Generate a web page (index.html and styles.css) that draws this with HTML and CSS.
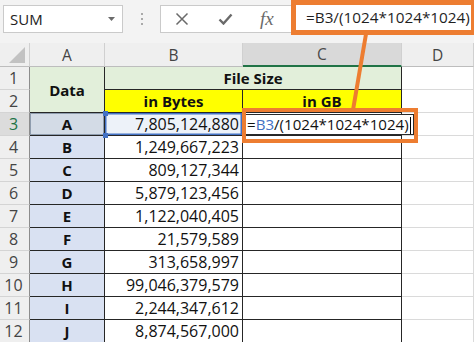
FILE: index.html
```html
<!DOCTYPE html>
<html>
<head>
<meta charset="utf-8">
<link rel="stylesheet" href="styles.css">
</head>
<body>
<div class="toolbar">
  <div class="namebox"><span>SUM</span><svg class="arrow" width="7" height="4" viewBox="0 0 7 4"><path d="M0 0H7L3.5 4Z" fill="#6b6b6b"/></svg></div>
  <div class="dots"><i></i><i></i><i></i></div>
  <div class="fbar">
    <svg class="ico" width="14" height="14" viewBox="0 0 14 14"><path d="M1.5 1.5L12.5 12.5M12.5 1.5L1.5 12.5" stroke="#6a6a6a" stroke-width="1.5" fill="none"/></svg>
    <svg class="ico chk" width="15" height="12" viewBox="0 0 15 12"><path d="M1.5 6.5L5.5 10.5L13.5 1.5" stroke="#6a6a6a" stroke-width="2.4" fill="none"/></svg>
    <span class="fx">fx</span>
  </div>
  <div class="finput">=B3/(1024*1024*1024)</div>
</div>
<div class="sheet">
  <div class="ch corner"><svg width="16" height="16" viewBox="0 0 16 16"><path d="M16 0V16H0Z" fill="#c2c2c2"/></svg></div>
  <div class="ch">A</div>
  <div class="ch">B</div>
  <div class="ch sel">C</div>
  <div class="ch">D</div>

  <div class="rh">1</div>
  <div class="c green b ctr span-r">Data</div>
  <div class="c green b ctr span-c">File Size</div>
  <div class="d"></div>

  <div class="rh">2</div>
  <div class="c yellow b ctr">in Bytes</div>
  <div class="c yellow b ctr">in GB</div>
  <div class="d"></div>

  <div class="rh rsel">3</div>
  <div class="c lab b ctr asel">A</div>
  <div class="c num ref">7,805,124,880<i class="h h1"></i><i class="h h2"></i></div>
  <div class="c edit"><div class="editbox">=<span class="blue">B3</span>/(1024*1024*1024)<i class="caret"></i></div></div>
  <div class="d"></div>

  <div class="rh">4</div>
  <div class="c lab b ctr">B</div>
  <div class="c num">1,249,667,223</div>
  <div class="c"></div>
  <div class="d"></div>

  <div class="rh">5</div>
  <div class="c lab b ctr">C</div>
  <div class="c num">809,127,344</div>
  <div class="c"></div>
  <div class="d"></div>

  <div class="rh">6</div>
  <div class="c lab b ctr">D</div>
  <div class="c num">5,879,123,456</div>
  <div class="c"></div>
  <div class="d"></div>

  <div class="rh">7</div>
  <div class="c lab b ctr">E</div>
  <div class="c num">1,122,040,405</div>
  <div class="c"></div>
  <div class="d"></div>

  <div class="rh">8</div>
  <div class="c lab b ctr">F</div>
  <div class="c num">21,579,589</div>
  <div class="c"></div>
  <div class="d"></div>

  <div class="rh">9</div>
  <div class="c lab b ctr">G</div>
  <div class="c num">313,658,997</div>
  <div class="c"></div>
  <div class="d"></div>

  <div class="rh">10</div>
  <div class="c lab b ctr">H</div>
  <div class="c num">99,046,379,579</div>
  <div class="c"></div>
  <div class="d"></div>

  <div class="rh">11</div>
  <div class="c lab b ctr">I</div>
  <div class="c num">2,244,347,612</div>
  <div class="c"></div>
  <div class="d"></div>

  <div class="rh">12</div>
  <div class="c lab b ctr">J</div>
  <div class="c num">8,874,567,000</div>
  <div class="c"></div>
  <div class="d"></div>
</div>
<div class="callout"></div>
<svg class="connector" width="474" height="342" viewBox="0 0 474 342"><path d="M366 34L353 110" stroke="#ed7d31" stroke-width="4" fill="none"/></svg>
</body>
</html>
```
FILE: styles.css
```css
html, body {
  margin: 0;
  padding: 0;
}
body {
  width: 474px;
  height: 342px;
  overflow: hidden;
  background: #ffffff;
  font-family: "Open Sans", "Noto Sans", sans-serif;
  position: relative;
}
* { box-sizing: border-box; }

.toolbar {
  display: flex;
  align-items: flex-start;
  height: 43px;
  background: #f3f3f3;
  padding-left: 3px;
}
.namebox {
  margin-top: 5px;
  width: 120px;
  height: 28px;
  background: #ffffff;
  border: 1px solid #cacaca;
  display: flex;
  align-items: center;
  justify-content: space-between;
  padding: 0 7px 0 6px;
  font-size: 15px;
  color: #222222;
}
.dots {
  width: 37px;
  margin-top: 13px;
  display: flex;
  flex-direction: column;
  align-items: center;
  gap: 3px;
}
.dots i {
  display: block;
  width: 2px;
  height: 2px;
  background: #a9a9a9;
}
.fbar {
  margin-top: 5px;
  width: 131px;
  height: 28px;
  background: #ffffff;
  border: 1px solid #cacaca;
  border-right: none;
  display: flex;
  align-items: center;
  padding-left: 14px;
}
.fbar .ico { display: block; }
.fbar .chk { margin-left: 29px; }
.fx {
  margin-left: 27px;
  font-family: "Liberation Serif", "DejaVu Serif", serif;
  font-style: italic;
  font-size: 19px;
  color: #6a6a6a;
  line-height: 1;
  margin-top: -2px;
}
.finput {
  width: 183px;
  flex: none;
  height: 35px;
  background: #ffffff;
  border: 5px solid #ed7d31;
  border-right-width: 3px;
  padding-left: 10px;
  font-size: 15.3px;
  line-height: 24px;
  color: #1f1f1f;
  white-space: nowrap;
  overflow: hidden;
}

.sheet {
  display: grid;
  grid-template-columns: 30px 75px 138px 159px 72px;
  grid-template-rows: 24px repeat(12, 23px);
}
.ch {
  background: #efefef;
  border-right: 1px solid #d0d0d0;
  border-bottom: 1px solid #bdbdbd;
  font-size: 15.5px;
  color: #444444;
  display: flex;
  align-items: center;
  justify-content: center;
}
.ch.sel {
  background: #d9d9d9;
  border-bottom: 2px solid #217346;
  color: #4a4a4a;
}
.corner {
  justify-content: flex-end;
  align-items: flex-end;
  padding: 0 4px 3px 0;
}
.corner svg { display: block; }
.rh {
  background: #efefef;
  border-right: 1px solid #8c8c8c;
  border-bottom: 1px solid #d4d4d4;
  font-size: 16px;
  color: #444444;
  display: flex;
  align-items: center;
  justify-content: center;
  padding-right: 2px;
}
.rh.rsel {
  background: #dcdcdc;
  color: #217346;
}
.c {
  border-right: 1px solid #262626;
  border-bottom: 1px solid #262626;
  font-size: 16px;
  color: #111111;
  display: flex;
  align-items: center;
  padding: 0 3px;
  white-space: nowrap;
}
.d {
  border-right: 1px solid #dadada;
  border-bottom: 1px solid #dadada;
}
.b { font-weight: 700; font-size: 15px; }
.ctr { justify-content: center; }
.num { justify-content: flex-end; }
.span-r { grid-row: span 2; }
.span-c { grid-column: span 2; }
.green { background: #e2efda; }
.yellow { background: #ffff00; }
.lab { background: #d9e1f2; }
.asel {
  background: #d3dbe6;
  box-shadow: inset 0 0 0 1px #8e9cae;
}
.ref {
  position: relative;
  background: #edf2f9;
  box-shadow: inset 0 0 0 1.5px #4472c4;
}
.h {
  position: absolute;
  left: -2px;
  width: 5px;
  height: 5px;
  background: #4472c4;
}
.h1 { top: -2px; }
.h2 { bottom: -3px; }
.edit {
  position: relative;
  overflow: visible;
}
.editbox {
  position: absolute;
  left: 2px;
  top: 1px;
  width: 169px;
  height: 21px;
  background: #ffffff;
  border: 1px solid #2a2a2a;
  padding-left: 1px;
  font-size: 15.1px;
  line-height: 19px;
  color: #111111;
  white-space: nowrap;
  z-index: 2;
}
.blue { color: #4472c4; }
.caret {
  display: inline-block;
  width: 1px;
  height: 17px;
  background: #000000;
  vertical-align: -4px;
  margin-left: 1px;
}
.callout {
  position: absolute;
  left: 242px;
  top: 108px;
  width: 176px;
  height: 35px;
  border: 4px solid #ed7d31;
  z-index: 3;
}
.connector {
  position: absolute;
  left: 0;
  top: 0;
  pointer-events: none;
  z-index: 4;
}
```
